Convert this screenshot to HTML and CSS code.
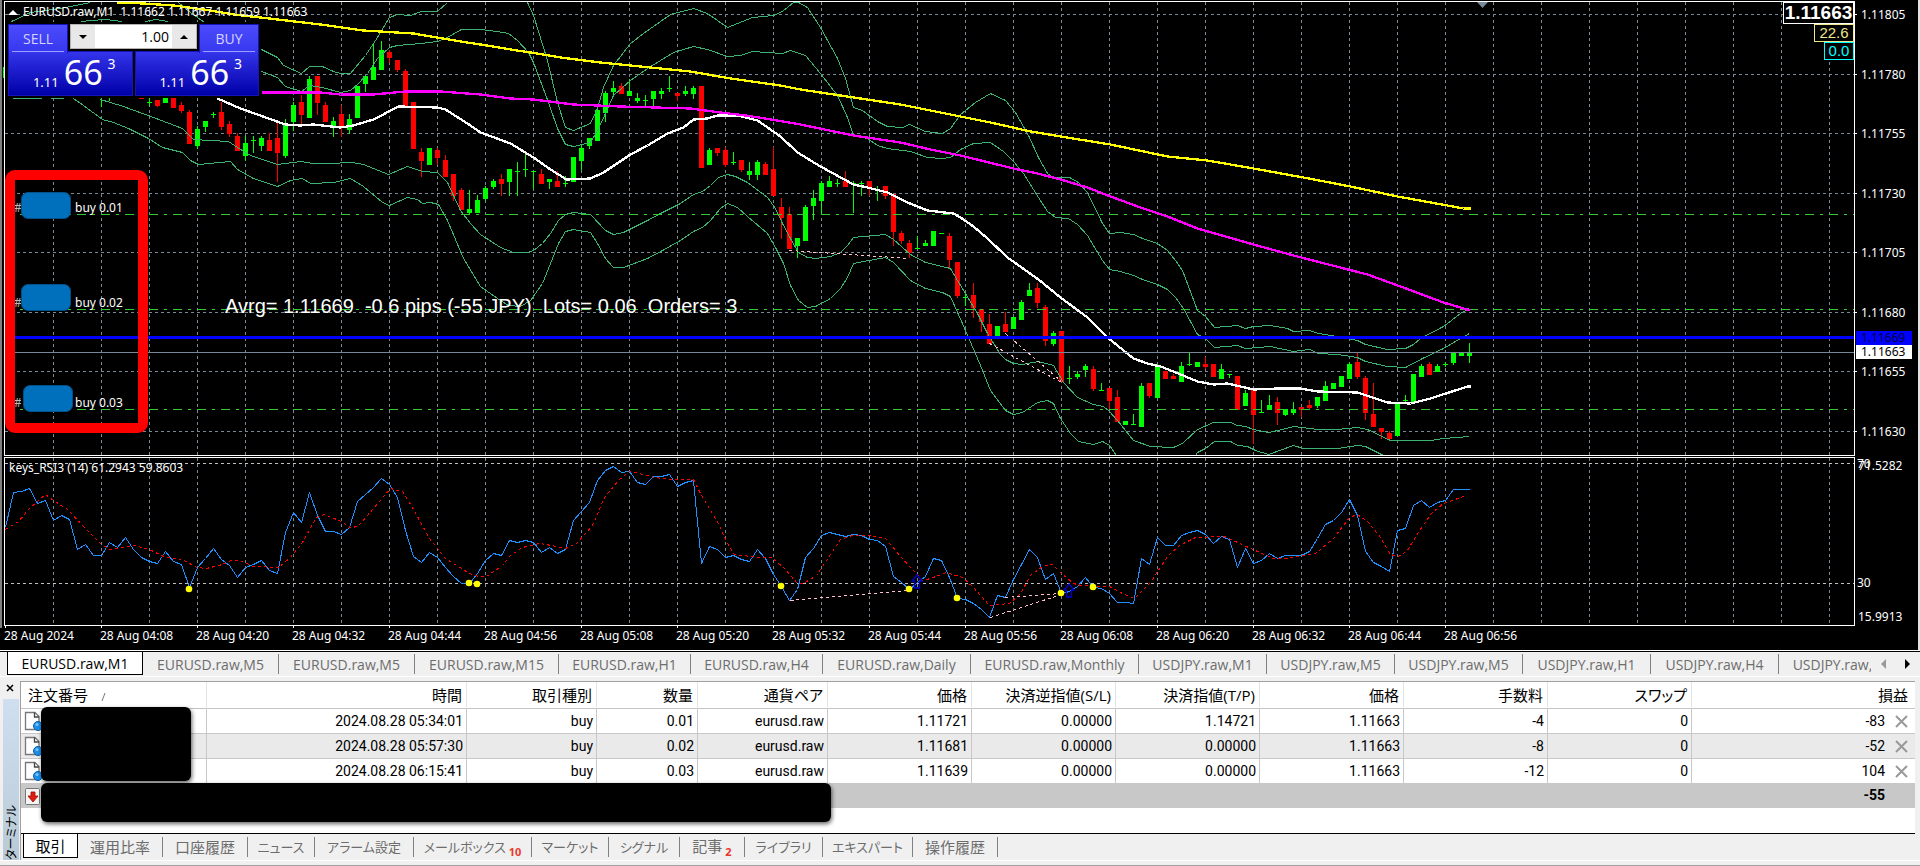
FILE: index.html
```html
<!DOCTYPE html>
<html lang="ja">
<head>
<meta charset="utf-8">
<title>EURUSD.raw,M1</title>
<link rel="stylesheet" href="styles.css">
</head>
<body>
<main class="app">
  <section class="chart" aria-label="EURUSD.raw,M1">
    <div class="plot">
      <svg class="canvas" id="canvas" aria-hidden="true"></svg>

      <h1 class="title"><span class="title-mark"></span>EURUSD.raw,M1&nbsp; 1.11662 1.11667 1.11659 1.11663</h1>

      <form class="trade">
        <button type="button" class="side sell">SELL</button>
        <div class="lots">
          <button type="button" class="step" aria-label="decrease"><svg width="8" height="4"><path d="M0 0h8L4 4z"/></svg></button>
          <input type="text" value="1.00" aria-label="lots">
          <button type="button" class="step" aria-label="increase"><svg width="8" height="4"><path d="M0 4h8L4 0z"/></svg></button>
        </div>
        <button type="button" class="side buy">BUY</button>
        <div class="quote left"><span class="small">1.11</span><span class="big">66</span><span class="sup">3</span></div>
        <div class="quote right"><span class="small">1.11</span><span class="big">66</span><span class="sup">3</span></div>
      </form>

      <div class="badges">
        <output class="badge price">1.11663</output>
        <output class="badge atr">22.6</output>
        <output class="badge spread">0.0</output>
      </div>

      <div class="order o1"><span class="hash">#</span><span class="mask"></span><span>buy 0.01</span></div>
      <div class="order o2"><span class="hash">#</span><span class="mask"></span><span>buy 0.02</span></div>
      <div class="order o3"><span class="hash">#</span><span class="mask"></span><span>buy 0.03</span></div>
      <div class="highlight"></div>

      <p class="summary">Avrg= 1.11669&nbsp; -0.6 pips (-55 JPY)&nbsp; Lots= 0.06&nbsp; Orders= 3</p>
      <p class="rsi-title">keys_RSI3 (14) 61.2943 59.8603</p>
    </div>
    <svg class="scale" id="scale" role="img" aria-label="price scale"></svg>
    <div class="times">
      <span>28 Aug 2024</span><span>28 Aug 04:08</span><span>28 Aug 04:20</span><span>28 Aug 04:32</span><span>28 Aug 04:44</span><span>28 Aug 04:56</span><span>28 Aug 05:08</span><span>28 Aug 05:20</span><span>28 Aug 05:32</span><span>28 Aug 05:44</span><span>28 Aug 05:56</span><span>28 Aug 06:08</span><span>28 Aug 06:20</span><span>28 Aug 06:32</span><span>28 Aug 06:44</span><span>28 Aug 06:56</span>
    </div>
  </section>

  <nav class="symbols">
    <div class="symbol-list">
      <button class="sym m active">EURUSD.raw,M1</button>
      <button class="sym m">EURUSD.raw,M5</button>
      <button class="sym m">EURUSD.raw,M5</button>
      <button class="sym l">EURUSD.raw,M15</button>
      <button class="sym h">EURUSD.raw,H1</button>
      <button class="sym h">EURUSD.raw,H4</button>
      <button class="sym d">EURUSD.raw,Daily</button>
      <button class="sym mo">EURUSD.raw,Monthly</button>
      <button class="sym s">USDJPY.raw,M1</button>
      <button class="sym s">USDJPY.raw,M5</button>
      <button class="sym s">USDJPY.raw,M5</button>
      <button class="sym s">USDJPY.raw,H1</button>
      <button class="sym s">USDJPY.raw,H4</button>
      <button class="sym d">USDJPY.raw,Daily</button>
    </div>
    <button class="arrow off" aria-label="前へ"><svg width="5" height="10"><path d="M5 0v10L0 5z"/></svg></button>
    <button class="arrow" aria-label="次へ"><svg width="5" height="10"><path d="M0 0v10l5-5z"/></svg></button>
  </nav>

  <section class="terminal">
    <div class="grip">
      <button class="close" aria-label="閉じる"><svg width="8" height="8"><path d="M1 1l6 6M7 1L1 7" stroke="#000" stroke-width="1.500"/></svg></button>
      <div class="caption"><span>ターミナル</span></div>
    </div>
    <div class="panel">
      <div class="sheet">
        <table>
          <colgroup><col class="c-id"><col class="c-time"><col class="c-type"><col class="c-lot"><col class="c-type"><col class="c-num"><col class="c-num"><col class="c-num"><col class="c-num"><col class="c-num"><col class="c-num"><col></colgroup>
          <thead>
            <tr><th class="id">注文番号 <svg class="sort" width="5" height="8"><path d="M4 0L1 8" stroke="#777"/></svg></th><th>時間</th><th>取引種別</th><th>数量</th><th>通貨ペア</th><th>価格</th><th>決済逆指値(S/L)</th><th>決済指値(T/P)</th><th>価格</th><th>手数料</th><th>スワップ</th><th class="pl-head">損益</th></tr>
          </thead>
          <tbody>
            <tr><td class="id"><svg class="doc" width="18" height="20"><use href="#doc"/></svg></td><td>2024.08.28 05:34:01</td><td>buy</td><td>0.01</td><td>eurusd.raw</td><td>1.11721</td><td>0.00000</td><td>1.14721</td><td>1.11663</td><td>-4</td><td>0</td><td>-83<button class="x" aria-label="決済"><svg width="13" height="13"><use href="#x"/></svg></button></td></tr>
            <tr><td class="id"><svg class="doc" width="18" height="20"><use href="#doc"/></svg></td><td>2024.08.28 05:57:30</td><td>buy</td><td>0.02</td><td>eurusd.raw</td><td>1.11681</td><td>0.00000</td><td>0.00000</td><td>1.11663</td><td>-8</td><td>0</td><td>-52<button class="x" aria-label="決済"><svg width="13" height="13"><use href="#x"/></svg></button></td></tr>
            <tr><td class="id"><svg class="doc" width="18" height="20"><use href="#doc"/></svg></td><td>2024.08.28 06:15:41</td><td>buy</td><td>0.03</td><td>eurusd.raw</td><td>1.11639</td><td>0.00000</td><td>0.00000</td><td>1.11663</td><td>-12</td><td>0</td><td>104<button class="x" aria-label="決済"><svg width="13" height="13"><use href="#x"/></svg></button></td></tr>
          </tbody>
          <tfoot>
            <tr><td class="id" colspan="11"><svg class="doc" width="18" height="20"><rect x="1.500" y="2.500" width="14" height="16" rx="1" fill="#f4f4f4" stroke="#777"/><path d="M7 6h4v4h3l-5 6-5-6h3z" fill="#e01c10" stroke="#a00c00" stroke-width=".8"/></svg></td><td>-55</td></tr>
          </tfoot>
        </table>
        <div class="redact ids"></div>
        <div class="redact balance"></div>
      </div>
      <nav class="panel-tabs">
        <button class="tab t-on">取引</button>
        <button class="tab t4">運用比率</button>
        <button class="tab t4">口座履歴</button>
        <button class="tab t-news">ニュース</button>
        <button class="tab t-alert">アラーム設定</button>
        <button class="tab t-mail">メールボックス<sub>10</sub></button>
        <button class="tab t-market">マーケット</button>
        <button class="tab t-signal">シグナル</button>
        <button class="tab t-article">記事<sub>2</sub></button>
        <button class="tab t-lib">ライブラリ</button>
        <button class="tab t-expert">エキスパート</button>
        <button class="tab t4">操作履歴</button>
      </nav>
    </div>
  </section>
</main>

<svg class="defs" width="0" height="0" aria-hidden="true">
  <defs>
    <g id="doc">
      <path d="M1.500 1.500h9.500l4 4v13h-13.500z" fill="#fdfdfd" stroke="#777" stroke-width="1.300"/>
      <path d="M10.500 1.500v4.500h4.500" fill="none" stroke="#444" stroke-width="1.300"/>
      <circle cx="14" cy="15" r="4.500" fill="#1c8fe8" stroke="#0b5fa8"/>
      <circle cx="13" cy="13.500" r="1.500" fill="#7cc6ff"/>
    </g>
    <path id="x" d="M1 1l11 11M12 1L1 12" stroke="#999" stroke-width="2"/>
  </defs>
</svg>
<script src="chart.js"></script>
</body>
</html>
```

FILE: styles.css
```css
* { box-sizing: border-box; }
body {
  margin: 0;
  background: #f0f0f0;
  color: #000;
  font-family: "Noto Sans", "Noto Sans CJK JP", sans-serif;
}
button { font: inherit; color: inherit; border: 0; padding: 0; background: none; }
p, h1 { margin: 0; font-weight: 400; }
.app { display: flex; flex-direction: column; min-height: 100vh; border-bottom: 1px solid #a0a0a0; }
.defs { position: absolute; left: 0; top: 0; }

/* chart window */
.chart {
  display: grid;
  grid-template-columns: minmax(0, 1fr) 66px;
  background: #000;
  color: #fff;
  font-size: 12px;
  line-height: 16px;
  border-bottom: 1px solid #fff;
}
.plot { position: relative; overflow: hidden; }
.canvas { display: block; width: 100%; height: 628px; }
.scale { display: block; width: 66px; height: 628px; font-size: 12px; border-right: 2px solid #e3e3e3; }
.scale text { fill: #fff; }
.scale .on-blue { fill: #000040; }
.scale .on-white { fill: #000; }
.times {
  grid-column: 1 / -1;
  display: flex;
  height: 22px;
  padding-left: 4px;
  border-right: 2px solid #e3e3e3;
  overflow: hidden;
}
.times span { flex: 0 0 96px; white-space: nowrap; }

.title { position: absolute; left: 8px; top: 4px; display: flex; align-items: center; font-size: 12px; line-height: 16px; white-space: nowrap; }
.title-mark { border: 5px solid transparent; border-top: 0; border-bottom-color: #fff; margin-right: 5px; }
.rsi-title { position: absolute; left: 9px; top: 460px; }
.summary { position: absolute; left: 225px; top: 295px; font: 20px/23px "Liberation Sans", sans-serif; white-space: nowrap; }

.trade {
  position: absolute;
  left: 5px;
  top: 22px;
  display: grid;
  grid-template-columns: 60px minmax(0, 1fr) minmax(0, 1fr) 60px;
  grid-template-rows: 27px 45px;
  width: 256px;
  padding: 2px 2px 2px 3px;
  background: #000;
}
.side {
  z-index: 1;
  height: 29px;
  color: #d4d4ff;
  font: 14px/25px "Open Sans", sans-serif;
  background: linear-gradient(#4c4cfc, #3636ee);
  border: 1px solid #1414b8;
  border-bottom: 0;
}
.side::after { content: ""; display: block; height: 1px; margin: 0 3px; background: #9c9cff; }
.lots {
  grid-column: 2 / 4;
  display: grid;
  grid-template-columns: 24px minmax(0, 1fr) 24px;
  height: 25px;
  margin: 0 2px;
  border: 1px solid #b4b4b4;
}
.step { display: grid; place-items: center; background: #e8e8e8; }
.lots input { min-width: 0; border: 0; padding: 0 3px; text-align: right; font: 14px "Open Sans", sans-serif; background: #fff; }
.quote { display: flex; justify-content: center; align-items: flex-end; gap: 5px; background: linear-gradient(#3434ea, #0000a8); border: 1px solid #1414b8; padding: 0 0 4px 8px; }
.quote.left { grid-column: 1 / 3; margin-right: 1px; }
.quote.right { grid-column: 3 / 5; margin-left: 1px; }
.small { font-size: 13px; line-height: 18px; }
.big { font-size: 34px; line-height: 38px; }
.sup { align-self: flex-start; font-size: 14px; line-height: 24px; }

.badges { position: absolute; right: 0; top: 2px; display: flex; flex-direction: column; align-items: flex-end; font-family: "Liberation Sans", sans-serif; }
.badge { background: #000; border: 1px solid; text-align: center; font-size: 15px; line-height: 16px; }
.badge.price { width: 71px; font-size: 19px; font-weight: 700; line-height: 20px; }
.badge.atr { width: 40px; color: #f0e68c; }
.badge.spread { width: 30px; color: #0ff; }

.order { position: absolute; left: 14px; display: flex; align-items: center; height: 27px; white-space: nowrap; }
.o1 { top: 194px; }
.o2 { top: 289px; }
.o3 { top: 389px; }
.hash { flex: 0 0 7px; overflow: hidden; color: #bbb; }
.mask { align-self: flex-start; width: 50px; height: 27px; margin-top: -2px; margin-right: 4px; border-radius: 7px; background: #0070bc; border: 1px solid #00508a; }
.o2 .mask { margin-top: -5px; }
.o3 .mask { margin: -4px 2px 0 2px; }
.highlight { position: absolute; left: 5px; top: 170px; width: 143px; height: 263px; border: 10px solid #f00; border-radius: 10px; }

/* symbol tabs */
.symbols { display: flex; align-items: center; height: 26px; border-top: 1px solid #000; border-bottom: 1px solid #fff; padding-left: 7px; }
.symbol-list { flex: 1; min-width: 0; display: flex; height: 24px; overflow: hidden; }
.sym { flex: none; height: 20px; margin-top: 2px; border-right: 1px solid #808080; color: #6d6d6d; font: 14px/19px "Open Sans", sans-serif; white-space: nowrap; overflow: hidden; }
.sym.active { height: 23px; margin-top: 0; background: #fff; color: #000; border: 1px solid #000; border-top: 0; }
.m { width: 136px; }
.l { width: 144px; }
.h { width: 132px; }
.d { width: 148px; }
.mo { width: 168px; }
.s { width: 128px; }
.symbol-list .sym:last-child { width: 140px; }
.arrow { flex: 0 0 24px; display: grid; place-items: center; height: 20px; }
.arrow:last-child { margin-right: 1px; }
.off { fill: #999; }

/* terminal */
.terminal { flex: 1; display: flex; padding: 4px 5px 0 0; border-bottom: 1px solid #fff; margin-bottom: 4px; }
.grip { flex: 0 0 20px; display: flex; flex-direction: column; }
.close { display: grid; place-items: center; height: 14px; }
.caption { flex: 1; display: flex; align-items: flex-end; margin: 4px 1px 0 3px; background: linear-gradient(#cfdff0, #b9cad6); }
.caption span { writing-mode: vertical-rl; text-orientation: sideways; rotate: 180deg; font: 12px/16px "Noto Sans CJK JP", sans-serif; font-feature-settings: "palt"; }
.panel { flex: 1; min-width: 0; display: flex; flex-direction: column; border-top: 1px solid #a0a0a0; border-left: 1px solid #a0a0a0; }
.sheet { position: relative; flex: 1; background: #fff; border-bottom: 1px solid #000; }
table { width: 100%; table-layout: fixed; border-spacing: 0; }
.c-id { width: 186px; }
.c-time { width: 260px; }
.c-type { width: 130px; }
.c-lot { width: 101px; }
.c-num { width: 144px; }
th, td { height: 25px; padding: 0 4px 0 0; text-align: right; font-weight: 400; border-right: 1px solid #c8c8c8; border-bottom: 1px solid #c8c8c8; white-space: nowrap; }
th { height: 27px; font: 15px/20px "Open Sans", "Noto Sans CJK JP", sans-serif; font-feature-settings: "palt"; border-right-color: #e4e4e4; border-bottom-color: #c4c4c4; }
td { padding-right: 3px; font: 14px/19px Roboto, sans-serif; }
.id { text-align: left; padding-left: 7px; }
td.id { padding-left: 3px; }
.sort { margin-left: 9px; }
.doc { display: block; }
tbody tr:nth-child(2) { background: #eaeaea; }
tbody tr:last-child td { height: 24px; border-bottom: 0; }
td:last-child, th:last-child { border-right: 0; padding-right: 7px; }
.x { width: 13px; height: 13px; margin-left: 10px; vertical-align: -2px; }
.x svg { display: block; }
tfoot td { background: #c8c8c8; border: 0; }
tfoot td:last-child { padding-right: 30px; font-weight: 700; }
.redact { position: absolute; left: 20px; background: #000; border-radius: 6px; box-shadow: 1px 2px 4px rgba(0, 0, 0, .6); }
.redact.ids { top: 25px; width: 150px; height: 74px; }
.redact.balance { top: 101px; width: 790px; height: 39px; }

.panel-tabs { display: flex; height: 26px; padding-left: 2px; }
.tab { flex: none; height: 20px; margin-top: 3px; border-right: 1px solid #808080; color: #6d6d6d; font: 13px/18px "Noto Sans CJK JP", sans-serif; font-feature-settings: "palt"; white-space: nowrap; }
.t-on { width: 55px; height: 24px; margin-top: 0; background: #fff; color: #000; border: 1px solid #000; border-top: 0; font-size: 15px; }
.t4 { width: 85px; font-size: 15px; }
.t-news { width: 67px; }
.t-alert { width: 99px; }
.t-mail { width: 118px; }
.t-market { width: 77px; }
.t-signal { width: 71px; }
.t-article { width: 65px; font-size: 15px; }
.t-lib { width: 78px; }
.t-expert { width: 90px; }
sub { margin-left: 3px; color: #e8382c; font: 700 11px/1 "Noto Sans", sans-serif; vertical-align: -4px; }
```

FILE: chart.js
```js
const NS = "http://www.w3.org/2000/svg";
const canvas = document.getElementById("canvas");
const scale = document.getElementById("scale");

function add(parent, name, attrs, text) {
  const el = document.createElementNS(NS, name);
  for (const key in attrs) el.setAttribute(key, attrs[key]);
  if (text) el.textContent = text;
  parent.appendChild(el);
  return el;
}
const rect = (x, y, w, h, fill) => add(canvas, "rect", { x, y, width: w, height: h, fill, "shape-rendering": "crispEdges" });
function line(x1, y1, x2, y2, stroke, dash) {
  const attrs = { x1, y1, x2, y2, stroke, "shape-rendering": "crispEdges" };
  if (dash) attrs["stroke-dasharray"] = dash;
  add(canvas, "line", attrs);
}
function curve(points, stroke, width, dash) {
  const attrs = { points, stroke, "stroke-width": width, fill: "none", "stroke-linejoin": "round", "shape-rendering": "crispEdges", transform: "translate(.5 .5)" };
  if (dash) attrs["stroke-dasharray"] = dash;
  add(canvas, "polyline", attrs);
}

const RIGHT = 4000, GRID = "#778899";
const priceLevels = [[14, "1.11805"], [74, "1.11780"], [133, "1.11755"], [193, "1.11730"], [252, "1.11705"], [312, "1.11680"], [371, "1.11655"], [431, "1.11630"]];

// grid
for (let x = 53; x < RIGHT; x += 48) {
  line(x + .5, 2, x + .5, 455, GRID, "3 3");
  line(x + .5, 458, x + .5, 625, GRID, "3 3");
}
for (const [y] of priceLevels) line(5, y + .5, RIGHT, y + .5, GRID, "3 3");
for (const y of [463, 583]) line(5, y + .5, RIGHT, y + .5, "#c0c0c0", "3 3");

// candles: x, body top, body bottom, wick top, wick bottom, direction (1 up, 0 down)
const candles = `5,67,78,67,78,1 101,98,98,98,107,1 109,98,98,98,101,1 141,98,99,98,99,0 149,102,103,98,106,1 157,100,106,100,107,0 165,98,103,98,103,1 173,98,108,98,108,0 181,105,111,102,113,0 189,112,144,110,144,0 197,129,146,126,149,1 205,121,127,121,132,1 213,114,115,112,118,1 221,112,127,102,130,0 229,124,134,121,137,0 237,136,151,133,151,0 245,143,156,136,161,1 253,140,141,136,153,1 261,138,146,136,151,1 269,140,151,133,151,0 277,138,153,123,182,0 285,124,156,119,158,1 293,105,122,102,131,1 301,102,115,95,124,0 309,79,118,76,118,1 317,76,103,76,115,0 325,105,122,102,122,0 333,121,126,117,137,1 341,114,127,105,137,0 349,119,130,114,134,1 357,86,118,86,118,1 365,76,84,75,92,1 373,67,80,43,80,1 381,50,70,41,70,1 389,52,58,50,63,0 397,60,70,60,72,0 405,71,106,69,106,0 413,102,149,102,149,0 421,152,161,148,177,0 429,148,165,148,165,1 437,150,158,148,165,0 445,160,177,155,177,0 453,174,196,174,201,0 461,190,210,188,210,0 469,209,213,190,214,1 477,200,213,195,213,1 485,188,199,186,201,1 493,181,187,179,189,1 501,179,184,174,196,0 509,169,182,169,196,1 517,171,172,162,196,1 525,169,170,152,177,1 533,171,172,171,189,1 541,174,184,169,184,0 549,179,182,179,189,1 557,181,187,171,187,0 565,183,184,176,187,1 573,157,182,157,182,1 581,148,161,144,170,1 589,138,146,138,149,1 597,110,141,110,141,1 605,93,113,91,122,1 613,88,92,81,96,1 621,86,94,83,94,0 629,91,96,79,96,1 637,98,101,93,103,1 645,100,101,95,106,1 653,91,99,91,106,1 661,91,94,88,99,1 669,88,89,76,92,1 677,93,96,93,101,0 685,91,94,86,96,1 693,88,94,86,99,1 701,86,168,86,168,0 709,150,165,148,165,1 717,148,153,148,156,0 725,150,165,147,167,0 733,162,163,152,165,1 741,160,170,160,172,0 749,171,175,162,180,1 757,162,175,160,180,1 765,164,175,162,175,0 773,169,196,147,196,0 781,207,218,198,239,0 789,214,249,207,249,0 797,238,246,238,258,1 805,207,241,205,241,1 813,198,206,190,220,1 821,183,201,181,214,1 829,181,187,176,187,1 837,183,184,179,187,1 845,181,187,171,187,0 853,183,184,181,213,1 861,183,184,181,196,1 869,181,189,181,196,0 877,189,190,186,201,1 885,186,196,186,199,0 893,194,232,194,246,0 901,233,241,231,244,0 909,243,253,240,258,0 917,248,249,236,249,1 925,243,246,240,246,1 933,231,246,231,246,1 941,233,234,233,234,1 949,236,260,233,268,0 957,262,296,262,298,0 965,297,298,294,306,1 973,295,308,283,318,0 981,309,322,309,332,0 989,324,344,314,344,0 997,326,336,326,336,1 1005,324,332,312,332,0 1013,317,329,317,329,1 1021,302,320,300,320,1 1029,290,296,283,296,1 1037,288,303,283,308,0 1045,307,341,305,346,0 1053,333,344,331,346,1 1061,331,382,331,382,0 1069,378,379,366,384,1 1077,374,377,371,379,1 1085,366,370,364,377,1 1093,369,389,366,391,0 1101,390,391,383,391,1 1109,388,401,388,409,0 1117,397,422,390,422,0 1125,421,425,421,425,1 1133,424,425,414,425,1 1141,386,427,383,427,1 1149,383,396,383,398,0 1157,366,398,364,398,1 1165,371,379,371,379,0 1173,376,379,374,379,0 1181,366,382,362,382,1 1189,364,365,352,366,1 1197,362,367,362,367,1 1205,364,367,357,369,0 1213,364,377,364,377,0 1221,369,379,364,379,1 1229,374,375,374,378,1 1237,376,410,376,410,0 1245,393,406,390,406,1 1253,390,415,390,444,0 1261,412,413,400,413,1 1269,405,410,395,410,1 1277,402,413,397,425,0 1285,409,415,409,416,1 1293,409,413,402,415,1 1301,407,410,407,417,0 1309,405,408,400,410,0 1317,397,406,397,408,1 1325,386,401,381,401,1 1333,383,389,383,389,1 1341,376,387,376,387,1 1349,364,379,362,379,1 1357,362,377,352,379,0 1365,378,413,376,420,0 1373,414,427,383,427,0 1381,428,432,428,439,0 1389,433,439,431,439,0 1397,403,436,403,436,1 1405,400,401,395,402,1 1413,374,403,374,403,1 1421,366,377,364,377,1 1429,364,375,362,375,0 1437,366,372,364,372,1 1445,364,365,362,367,1 1453,352,363,352,365,1 1461,352,356,352,356,1 1469,352,356,343,363,1`;
for (const item of candles.split(" ")) {
  const [x, top, bottom, high, low, up] = item.split(",").map(Number);
  const color = up ? "#00ff00" : "#ff0000";
  rect(x, high, 1, low - high, color);
  rect(x - 2, top, 5, bottom - top, color);
}

// bands
const BAND = "#3cb371";
[
  "11,21 30,12 60,8 90,2", "178,2 190,12 204,22", "81,21 90,20 105,19 122,21", "145,21 155,19 168,21", "12,98 41,98", "50,98 63,98",
  "261,49 277,57 283,65 301,73 309,66 322,66 333,71 340,73 350,73 365,55 377,37 389,17 397,14 410,15 421,11 437,11 447,2",
  "527,2 533,15 547,60 557,102 565,127 573,130 590,123 597,108 603,87 613,65 630,43 643,33 670,14 693,8 707,13 727,27 752,17 773,15 782,11 793,2 798,2 807,7 820,27 837,58 845,78 853,107 862,110 877,121 887,126 902,127 909,124 925,131 942,133 950,128 960,114 975,102 990,93 1005,100 1015,112 1028,135 1038,157 1047,173 1053,177 1069,177 1078,182 1087,192 1102,223 1109,233 1120,232 1133,234 1142,238 1157,243 1167,250 1175,260 1182,270 1197,310 1205,316 1214,327 1237,325 1245,328 1253,326 1270,325 1287,328 1293,331 1309,330 1318,333 1337,336 1357,340 1365,344 1387,349 1405,348 1413,344 1420,338 1443,326 1460,313 1469,308",
  "261,71 277,77 285,86 301,91 309,85 322,87 340,92 350,90 358,83 367,73 377,58 389,47 397,45 421,43 437,41 447,37 461,29 480,29 497,31 508,33 517,40 528,52 533,62 548,102 557,128 565,144 573,146 590,142 597,130 605,113 613,95 630,80 647,68 673,52 693,46 707,49 727,56 740,55 752,51 782,53 790,50 805,55 820,73 837,95 847,117 853,135 867,138 877,145 887,148 910,151 927,157 942,158 950,157 960,149 973,143 990,142 1003,151 1013,161 1023,173 1038,197 1047,211 1055,217 1068,218 1077,224 1087,235 1102,260 1109,269 1120,271 1133,275 1142,279 1157,284 1167,289 1175,297 1183,308 1197,334 1205,338 1214,347 1237,345 1245,348 1270,346 1293,351 1309,349 1318,353 1337,354 1357,357 1365,361 1387,366 1405,367 1422,358 1443,348 1460,338 1469,333",
  "100,99 123,106 153,117 182,128 193,139 228,141 237,147 250,155 277,164 300,161 312,163 327,163 352,162 363,164 388,174 407,166 422,171 437,172 447,182 460,210 470,223 480,234 500,247 513,252 527,252 533,250 542,243 550,233 558,220 565,214 573,212 590,214 605,230 613,234 623,232 647,220 660,213 680,203 693,194 702,191 710,185 718,177 727,174 735,176 747,182 767,197 775,208 782,223 790,238 798,252 807,257 815,258 830,256 840,252 847,245 853,237 863,236 885,234 893,239 910,254 925,262 950,268 957,280 965,293 977,313 987,333 1000,354 1005,359 1013,363 1022,364 1038,361 1053,365 1063,382 1077,397 1093,404 1103,406 1109,411 1117,420 1133,440 1150,446 1173,447 1182,443 1197,429 1213,422 1230,422 1237,425 1245,426 1253,429 1268,432 1282,429 1293,426 1317,429 1337,429 1357,427 1367,429 1390,440 1430,440 1443,438 1469,436",
  "73,98 83,105 102,119 113,122 128,128 148,138 162,147 182,152 190,160 198,164 230,161 237,169 253,178 277,186 290,180 302,178 310,183 333,182 350,178 363,186 382,202 389,205 407,197 417,199 422,203 430,202 438,204 447,220 463,258 480,286 497,298 508,305 520,306 530,300 542,283 550,263 558,243 565,231 573,229 590,232 597,243 605,258 613,267 623,267 647,258 662,250 680,240 693,231 702,227 710,220 720,208 727,203 737,207 747,216 767,233 775,247 783,263 790,285 798,300 807,307 815,306 830,298 840,288 847,277 853,263 863,261 885,257 893,262 910,280 925,288 942,292 950,296 965,330 980,365 990,390 1005,410 1013,414 1022,412 1037,402 1047,400 1053,403 1060,418 1070,433 1078,441 1093,444 1102,441 1109,445 1116,455",
  "1195,455 1197,452 1205,448 1214,441 1230,441 1237,445 1247,446 1255,450 1268,454 1282,449 1293,445 1303,448 1337,448 1357,445 1365,446 1383,455"
].forEach(points => curve(points, BAND, 1));

// order levels, divergence lines
for (const y of [214, 309, 409]) line(5, y + .5, RIGHT, y + .5, "#32cd32", "9 6 3 6");
for (const p of ["789,250 909,258", "989,343 1061,382", "1005,333 1061,381"]) curve(p, "#ffc0cb", 1, "3 3");

// moving averages
curve("217,98 240,108 285,124 300,125 313,124 340,127 353,125 373,119 398,106 437,107 445,109 467,123 480,132 510,143 533,157 550,169 566,179 590,178 603,172 630,154 647,145 667,133 683,127 693,119 707,118 717,115 737,115 757,120 780,136 797,152 820,166 853,184 867,187 887,192 907,202 927,210 953,213 960,217 973,226 987,238 1007,257 1038,279 1060,297 1087,317 1107,337 1133,358 1147,363 1160,366 1173,371 1197,381 1213,384 1227,383 1253,389 1277,388 1300,388 1317,391 1357,392 1387,402 1410,403 1430,398 1467,386 1470,386", "#fff", 2.3);
curve("261,92 320,92 340,94 373,94 405,91 440,91 480,94 510,98 533,99 573,104 620,106 690,108 720,112 745,115 765,118 800,124 853,135 900,142 930,149 960,155 1013,168 1037,173 1060,179 1087,187 1110,196 1140,207 1167,216 1197,228 1253,244 1293,255 1367,274 1400,286 1443,302 1470,310", "#f0f", 2.3);
curve("117,2 143,3 173,5 203,9 233,14 260,17 320,24 363,30 413,33 460,41 480,44 510,49 530,52 560,57 600,62 640,66 690,71 730,78 780,85 800,89 860,98 900,104 930,110 960,116 990,122 1030,131 1060,136 1110,144 1167,156 1207,160 1253,168 1303,177 1350,186 1397,196 1447,205 1463,208 1470,208", "#ff0", 2.3);

rect(5, 352, RIGHT, 1, GRID);
rect(5, 336, RIGHT, 3, "#0000ff");
add(canvas, "path", { d: "M1477 2h11l-5.500 6z", fill: GRID });

// RSI: one value per bar, 8px apart
const rsi = [527,492,491,488,503,500,520,515,519,549,544,555,555,542,547,537,549,557,561,563,551,561,564,587,567,558,548,559,565,577,567,564,560,570,573,532,512,522,492,515,531,531,534,527,501,494,487,478,484,497,530,556,562,552,557,567,576,583,583,573,560,553,555,540,542,540,542,552,547,553,549,520,511,502,480,470,466,472,471,482,484,476,476,474,486,482,480,563,546,549,557,555,559,561,549,558,574,586,600,589,557,548,535,532,534,536,534,535,539,540,546,576,582,589,582,576,558,560,577,598,599,603,609,617,595,597,579,564,549,557,579,573,593,591,586,577,587,588,593,602,602,603,558,564,537,545,545,535,532,530,534,543,536,539,567,548,563,560,553,558,555,555,555,551,538,524,520,512,499,515,551,562,566,571,530,528,505,500,507,502,500,489,489,489];
curve(rsi.map((y, i) => `${5 + i * 8},${y}`).join(" "), "#1e90ff", 1);
curve("5,529 18,521 29,508 45,494 53,500 67,509 84,527 101,544 110,549 135,545 151,550 163,556 182,559 196,567 206,568 222,564 231,560 239,560 253,566 278,567 290,557 302,542 316,517 324,514 341,521 351,528 359,524 373,508 390,488 402,491 412,507 429,538 445,558 469,573 478,576 486,576 502,565 510,555 522,547 539,543 551,545 565,548 576,543 592,525 604,497 618,480 629,471 639,473 654,477 673,479 693,479 701,495 718,523 726,541 734,554 758,557 771,557 783,567 797,583 803,583 816,575 828,557 840,539 852,535 869,535 885,538 901,557 922,580 930,578 946,572 962,577 973,587 989,605 1009,603 1020,593 1030,575 1042,566 1052,564 1060,572 1073,583 1081,585 1109,586 1122,593 1134,598 1150,582 1167,556 1179,545 1195,537 1224,536 1248,547 1273,558 1284,558 1304,555 1315,553 1333,538 1349,517 1357,514 1368,522 1380,537 1390,554 1398,556 1407,550 1419,530 1431,513 1443,503 1466,495", "#ff0000", 1, "3 3");
for (const p of ["790,600 906,590", "1005,597 1060,593", "990,617 1061,594"]) curve(p, "#ffc0cb", 1, "3 3");
for (const [x, y] of [[189, 589], [469, 583], [477, 584], [781, 586], [909, 589], [957, 598], [1061, 593], [1093, 587]])
  add(canvas, "circle", { cx: x, cy: y, r: 3.3, fill: "#ff0" });
for (const [x, y] of [[917, 575], [1069, 584]])
  add(canvas, "path", { d: `M${x} ${y}l5 6h-2.500v7h-5v-7h-2.500z`, fill: "none", stroke: "#0000cd", "stroke-width": 1.4 });

// frames
rect(0, 0, 2, 629, "#808080");
rect(4, 1, RIGHT, 1, "#fff");
rect(4, 455, RIGHT, 1, "#fff");
rect(4, 457, RIGHT, 1, "#fff");
rect(4, 625, RIGHT, 1, "#fff");
rect(4, 1, 1, 455, "#fff");
rect(4, 457, 1, 169, "#fff");
for (let x = 5; x < 1500; x += 96) rect(x, 626, 1, 2, "#fff");

// price scale
add(scale, "rect", { x: 0, y: 1, width: 1, height: 455, fill: "#fff" });
add(scale, "rect", { x: 0, y: 457, width: 1, height: 169, fill: "#fff" });
for (const [y, label] of priceLevels) {
  add(scale, "rect", { x: 0, y, width: 3, height: 1, fill: "#fff" });
  add(scale, "text", { x: 7, y: y + 5 }, label);
}
add(scale, "rect", { x: 2, y: 331, width: 56, height: 14, fill: "#0000ff" });
add(scale, "rect", { x: 2, y: 345, width: 56, height: 14, fill: "#fff" });
add(scale, "text", { x: 7, y: 342, class: "on-blue" }, "1.11669");
add(scale, "text", { x: 7, y: 356, class: "on-white" }, "1.11663");
add(scale, "text", { x: 3, y: 468 }, "70");
add(scale, "text", { x: 4, y: 470 }, "71.5282");
add(scale, "text", { x: 3, y: 587 }, "30");
add(scale, "text", { x: 4, y: 621 }, "15.9913");
```
